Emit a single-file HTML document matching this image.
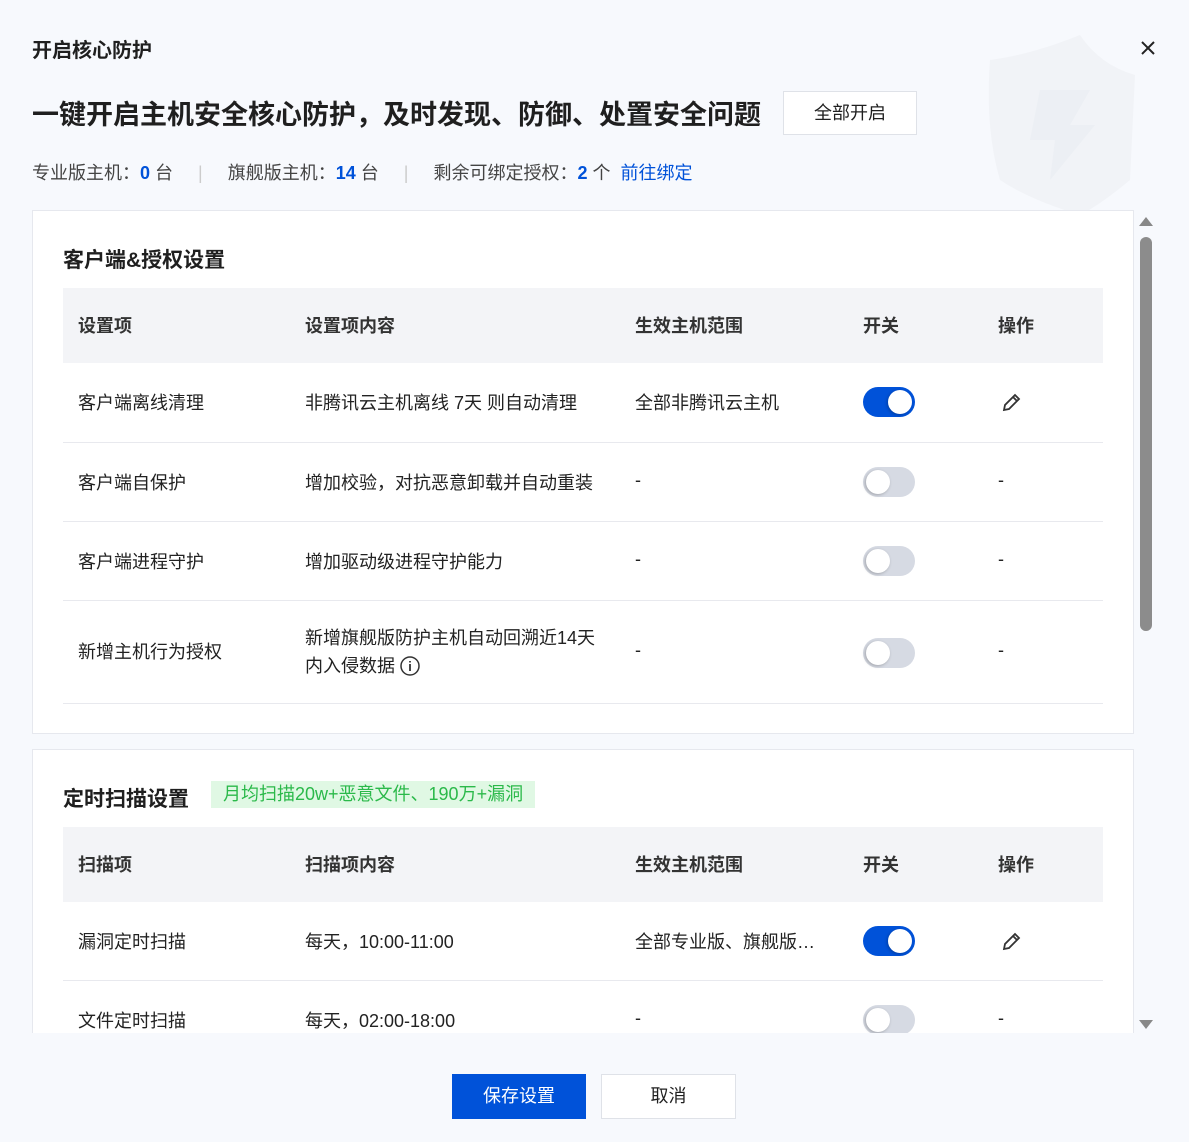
<!DOCTYPE html>
<html><head><meta charset="utf-8"><style>
*{margin:0;padding:0;box-sizing:border-box}
body{width:1189px;height:1142px;background:#f7f9fd;font-family:"Liberation Sans","Noto Sans CJK SC",sans-serif;color:#1f1f1f;position:relative;overflow:hidden}
.a{position:absolute;white-space:nowrap}
.view{position:absolute;left:32px;top:210px;width:1102px;height:823px;overflow:hidden}
.card{position:absolute;left:0;width:1102px;background:#fff;border:1px solid #e6e8ee}
.hd{position:absolute;left:30px;width:1040px;height:75px;background:#f3f4f7}
.th{position:absolute;font-size:18px;font-weight:bold;color:#333;top:24px}
.row{position:absolute;left:30px;width:1040px;border-bottom:1px solid #e8e9ee}
.td{position:absolute;font-size:18px;color:#222;white-space:nowrap}
.sw{position:absolute;left:800px;width:52px;height:30px;border-radius:15px;background:#d6dae3}
.sw::after{content:"";position:absolute;left:3px;top:3px;width:24px;height:24px;border-radius:50%;background:#fff;box-shadow:-1px 1px 3px rgba(0,0,0,.25)}
.sw.on{background:#0052d9}.sw.on::after{left:25px}
.ttl{position:absolute;left:30px;font-size:21px;font-weight:bold}
</style></head><body>
<svg class="a" style="left:960px;top:30px" width="180" height="185" viewBox="0 0 180 185">
<path d="M30 30 Q70 25 120 5 Q140 35 175 45 L170 150 Q140 175 120 185 Q70 170 40 150 Q25 100 30 30Z" fill="#f1f3f7"/>
<path d="M80 60 L130 60 L110 95 L135 95 L90 150 L95 110 L70 110Z" fill="#eceff4"/>
</svg>
<div class="a" style="left:32px;top:34px;font-size:20px;font-weight:bold">开启核心防护</div>
<svg class="a" style="left:1140px;top:40px" width="16" height="16" viewBox="0 0 16 16"><path d="M2 2L14 14M14 2L2 14" stroke="#222" stroke-width="2"/></svg>
<div class="a" style="left:32px;top:93px;font-size:27px;font-weight:bold">一键开启主机安全核心防护，及时发现、防御、处置安全问题</div>
<div class="a" style="left:783px;top:91px;width:134px;height:44px;background:#fff;border:1px solid #dfe2e8;font-size:18px;text-align:center;line-height:42px">全部开启</div>
<div class="a" style="left:32px;top:159px;font-size:18px;color:#444">专业版主机：<b style="color:#0052d9">0</b> 台 <span style="color:#ccc;margin:0 20px">|</span> 旗舰版主机：<b style="color:#0052d9">14</b> 台 <span style="color:#ccc;margin:0 20px">|</span> 剩余可绑定授权：<b style="color:#0052d9">2</b> 个 &nbsp;<span style="color:#0052d9">前往绑定</span></div>

<div class="view">
<div class="card" style="top:0;height:524px">
<div class="ttl" style="top:33px">客户端&amp;授权设置</div>
<div class="hd" style="top:77px"><div class="th" style="left:15px">设置项</div><div class="th" style="left:242px">设置项内容</div><div class="th" style="left:572px">生效主机范围</div><div class="th" style="left:800px">开关</div><div class="th" style="left:935px">操作</div></div>
<div class="row" style="top:152px;height:80px"><div class="td" style="left:15px;top:26px">客户端离线清理</div><div class="td" style="left:242px;top:26px">非腾讯云主机离线 7天 则自动清理</div><div class="td" style="left:572px;top:26px">全部非腾讯云主机</div><div class="sw on" style="top:24px"></div>
<svg class="a" style="left:937px;top:29px" width="22" height="22" viewBox="0 0 22 22"><path d="M4 18L5 13L15 3L19 7L9 17Z M13 5L17 9" fill="none" stroke="#333" stroke-width="1.8"/></svg></div>
<div class="row" style="top:232px;height:79px"><div class="td" style="left:15px;top:26px">客户端自保护</div><div class="td" style="left:242px;top:26px">增加校验，对抗恶意卸载并自动重装</div><div class="td" style="left:572px;top:27px">-</div><div class="sw" style="top:24px"></div><div class="td" style="left:935px;top:27px">-</div></div>
<div class="row" style="top:311px;height:79px"><div class="td" style="left:15px;top:26px">客户端进程守护</div><div class="td" style="left:242px;top:26px">增加驱动级进程守护能力</div><div class="td" style="left:572px;top:27px">-</div><div class="sw" style="top:24px"></div><div class="td" style="left:935px;top:27px">-</div></div>
<div class="row" style="top:390px;height:103px"><div class="td" style="left:15px;top:37px">新增主机行为授权</div><div class="td" style="left:242px;top:23px;line-height:28px">新增旗舰版防护主机自动回溯近14天<br>内入侵数据 <svg width="20" height="20" viewBox="0 0 20 20" style="vertical-align:-4px"><circle cx="10" cy="10" r="9" fill="none" stroke="#333" stroke-width="1.5"/><path d="M10 8V15M10 5V6.5" stroke="#333" stroke-width="1.8"/></svg></div><div class="td" style="left:572px;top:39px">-</div><div class="sw" style="top:37px"></div><div class="td" style="left:935px;top:39px">-</div></div>
</div>
<div class="card" style="top:539px;height:400px">
<div class="ttl" style="top:33px">定时扫描设置</div>
<div class="a" style="left:178px;top:31px;height:27px;padding:0 12px;background:#e0f8e4;color:#2bb94a;font-size:18px;line-height:27px">月均扫描20w+恶意文件、190万+漏洞</div>
<div class="hd" style="top:77px"><div class="th" style="left:15px">扫描项</div><div class="th" style="left:242px">扫描项内容</div><div class="th" style="left:572px">生效主机范围</div><div class="th" style="left:800px">开关</div><div class="th" style="left:935px">操作</div></div>
<div class="row" style="top:152px;height:79px"><div class="td" style="left:15px;top:26px">漏洞定时扫描</div><div class="td" style="left:242px;top:26px">每天，10:00-11:00</div><div class="td" style="left:572px;top:26px">全部专业版、旗舰版…</div><div class="sw on" style="top:24px"></div>
<svg class="a" style="left:937px;top:29px" width="22" height="22" viewBox="0 0 22 22"><path d="M4 18L5 13L15 3L19 7L9 17Z M13 5L17 9" fill="none" stroke="#333" stroke-width="1.8"/></svg></div>
<div class="row" style="top:231px;height:79px"><div class="td" style="left:15px;top:26px">文件定时扫描</div><div class="td" style="left:242px;top:26px">每天，02:00-18:00</div><div class="td" style="left:572px;top:27px">-</div><div class="sw" style="top:24px"></div><div class="td" style="left:935px;top:27px">-</div></div>
</div>
</div>
<div class="a" style="left:1139px;top:217px;width:0;height:0;border-left:7px solid transparent;border-right:7px solid transparent;border-bottom:9px solid #888"></div>
<div class="a" style="left:1140px;top:237px;width:12px;height:394px;border-radius:6px;background:#8c8c8c"></div>
<div class="a" style="left:1139px;top:1020px;width:0;height:0;border-left:7px solid transparent;border-right:7px solid transparent;border-top:9px solid #888"></div>
<div class="a" style="left:452px;top:1074px;width:134px;height:45px;background:#0052d9;color:#fff;font-size:18px;text-align:center;line-height:45px">保存设置</div>
<div class="a" style="left:601px;top:1074px;width:135px;height:45px;background:#fff;border:1px solid #dfe2e8;font-size:18px;text-align:center;line-height:43px">取消</div>
</body></html>
